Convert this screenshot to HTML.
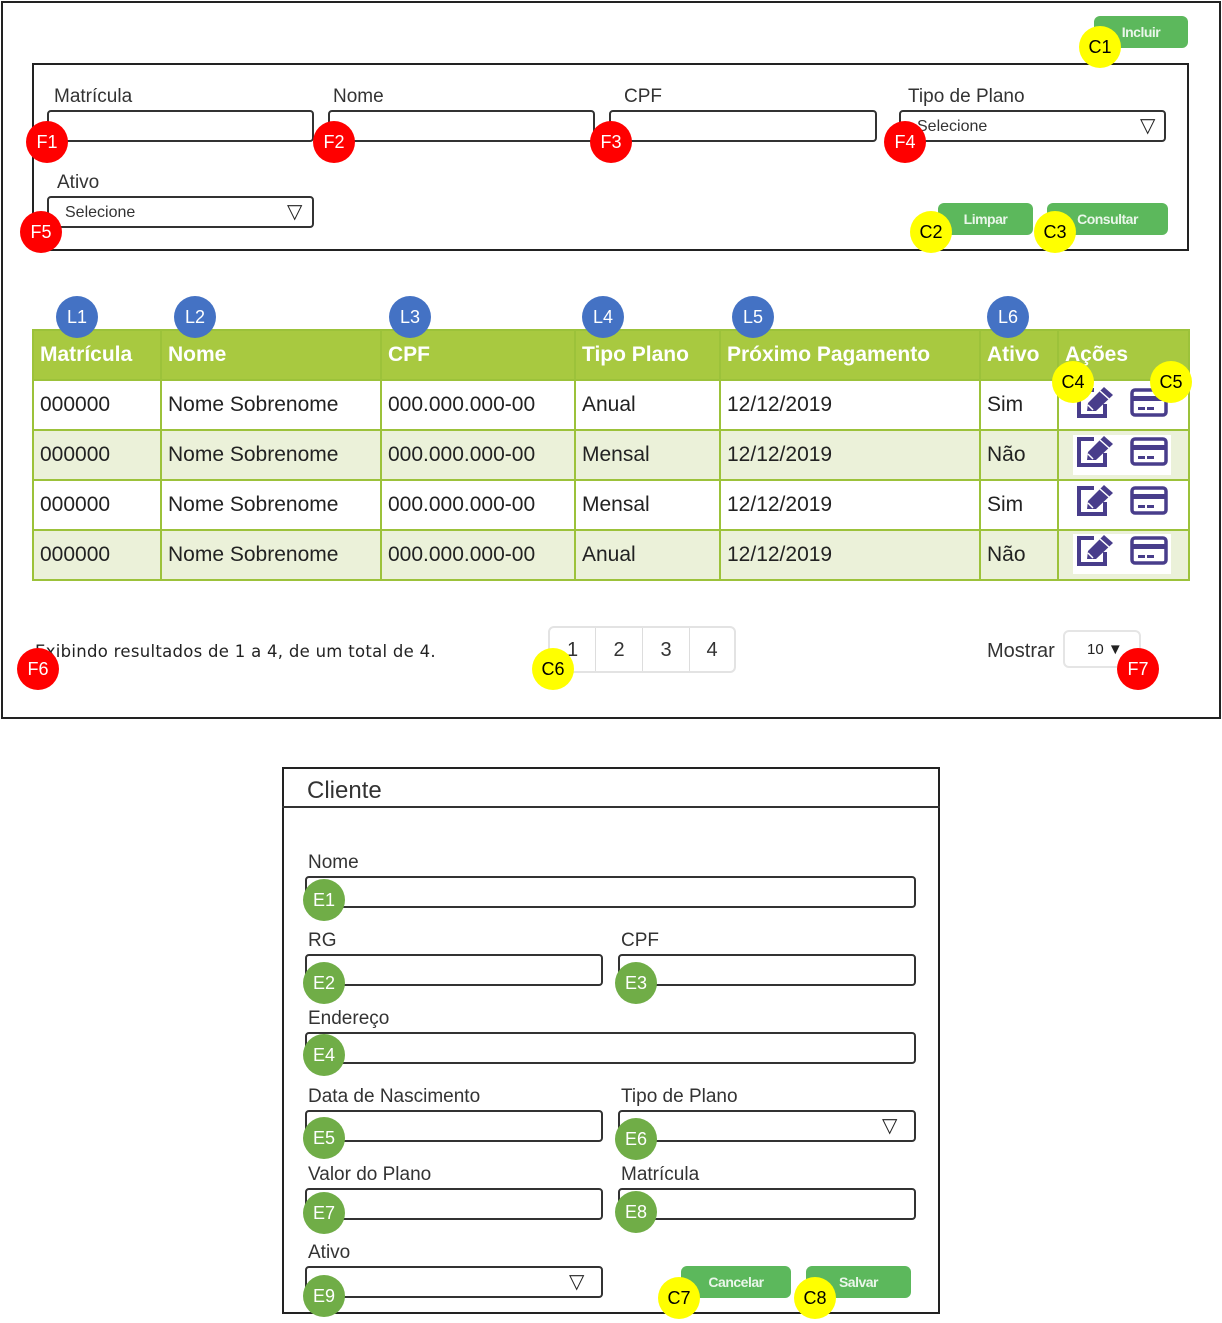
<!DOCTYPE html>
<html><head><meta charset="utf-8"><style>
*{box-sizing:border-box;margin:0;padding:0}
body{width:1222px;height:1323px;background:#fff;position:relative;font-family:"Liberation Sans",sans-serif;color:#333;overflow:hidden}
.a{position:absolute}
.in{position:absolute;border:2px solid #333;border-radius:4px;background:#fff;height:32px}
.lb{position:absolute;font-size:19px;color:#333;line-height:22px}
.bt{position:absolute;background:#5cb85c;color:#eaf6ea;border-radius:6px;font-size:14px;font-weight:bold;text-align:center;line-height:32px;height:32px;letter-spacing:-0.5px}
.bd{position:absolute;width:42px;height:42px;border-radius:50%;font-size:18px;text-align:center;line-height:42px;z-index:5}
.r{background:#f00;color:#fff}.y{background:#ff0;color:#000}.bl{background:#4472c4;color:#fff}.g{background:#70ad47;color:#fff}
.tri{position:absolute;font-size:20px;color:#222;line-height:20px}
table{position:absolute;left:32px;top:329px;border-collapse:collapse;border:2px solid #9cc23a}
td,th{border:2px solid #9cc23a;text-align:left;padding:0 6px;font-size:21px;height:50px;color:#222;font-weight:normal}
th{background:#a8c940;color:#fff;font-weight:bold;height:50px}
tr.e td{background:#ebf1d9}
.ic{background:#fff;padding:0;white-space:nowrap}
</style></head><body>
<div class="a" style="left:1px;top:1px;width:1220px;height:718px;border:2px solid #222"></div>
<div class="bt" style="left:1094px;top:16px;width:94px">Incluir</div>
<div class="a" style="left:32px;top:63px;width:1157px;height:188px;border:2px solid #222"></div>
<div class="lb" style="left:54px;top:86px">Matrícula</div>
<div class="lb" style="left:333px;top:86px">Nome</div>
<div class="lb" style="left:624px;top:86px">CPF</div>
<div class="lb" style="left:908px;top:86px">Tipo de Plano</div>
<div class="in" style="left:47px;top:110px;width:267px"></div>
<div class="in" style="left:328px;top:110px;width:267px"></div>
<div class="in" style="left:609px;top:110px;width:268px"></div>
<div class="in" style="left:899px;top:110px;width:267px"><span class="a" style="left:16px;top:6px;font-size:16px">Selecione</span></div>
<div class="tri" style="left:1140px;top:116px">▽</div>
<div class="lb" style="left:57px;top:172px">Ativo</div>
<div class="in" style="left:47px;top:196px;width:267px"><span class="a" style="left:16px;top:6px;font-size:16px">Selecione</span></div>
<div class="tri" style="left:287px;top:202px">▽</div>
<div class="bt" style="left:938px;top:203px;width:95px">Limpar</div>
<div class="bt" style="left:1047px;top:203px;width:121px">Consultar</div>

<table>
<tr><th style="width:128px">Matrícula</th><th style="width:220px">Nome</th><th style="width:194px">CPF</th><th style="width:145px">Tipo Plano</th><th style="width:260px">Próximo Pagamento</th><th style="width:78px">Ativo</th><th style="width:131px">Ações</th></tr>
<tr><td>000000</td><td>Nome Sobrenome</td><td>000.000.000-00</td><td>Anual</td><td>12/12/2019</td><td>Sim</td><td class="ic"></td></tr>
<tr class="e"><td>000000</td><td>Nome Sobrenome</td><td>000.000.000-00</td><td>Mensal</td><td>12/12/2019</td><td>Não</td><td class="ic" style="background:#ebf1d9"></td></tr>
<tr><td>000000</td><td>Nome Sobrenome</td><td>000.000.000-00</td><td>Mensal</td><td>12/12/2019</td><td>Sim</td><td class="ic"></td></tr>
<tr class="e"><td>000000</td><td>Nome Sobrenome</td><td>000.000.000-00</td><td>Anual</td><td>12/12/2019</td><td>Não</td><td class="ic" style="background:#ebf1d9"></td></tr>
</table>
<svg class="a" style="left:0;top:0" width="1222" height="600">
<defs>
<g id="ed"><path d="M18 4 H3 V30 H29 V18" fill="none" stroke="#483d8b" stroke-width="4"/><path d="M11 25 L12 17 L28 1 L37 9 L20 25 Z" fill="#483d8b"/><path d="M12 19 L17 24" stroke="#fff" stroke-width="1.5"/><path d="M24 5 L33 13" stroke="#fff" stroke-width="1.5"/></g>
<g id="cd"><rect x="2" y="2" width="34" height="25" rx="3" fill="none" stroke="#483d8b" stroke-width="3.5"/><rect x="2" y="8" width="34" height="5" fill="#483d8b"/><rect x="8" y="19" width="7" height="3" fill="#483d8b"/><rect x="17" y="19" width="7" height="3" fill="#483d8b"/></g>
</defs>
<rect x="1073" y="435" width="98" height="40" fill="#fff"/><rect x="1073" y="534" width="98" height="40" fill="#fff"/>
<use href="#ed" x="1076" y="386"/><use href="#cd" x="1130" y="388"/>
<use href="#ed" x="1076" y="435"/><use href="#cd" x="1130" y="437"/>
<use href="#ed" x="1076" y="484"/><use href="#cd" x="1130" y="486"/>
<use href="#ed" x="1076" y="534"/><use href="#cd" x="1130" y="536"/>
</svg>

<div class="a" style="left:35px;top:642px;font-size:17px;color:#222;font-family:'DejaVu Sans',sans-serif;letter-spacing:0.3px;transform:scaleX(0.97);transform-origin:left">Exibindo resultados de 1 a 4, de um total de 4.</div>
<div class="a" style="left:548px;top:626px;width:188px;height:47px;border:2px solid #e3e3e3;border-radius:6px;display:flex">
<div style="width:46px;border-right:1px solid #ddd;text-align:center;line-height:45px;font-size:20px">1</div>
<div style="width:47px;border-right:1px solid #ddd;text-align:center;line-height:45px;font-size:20px">2</div>
<div style="width:47px;border-right:1px solid #ddd;text-align:center;line-height:45px;font-size:20px">3</div>
<div style="width:44px;text-align:center;line-height:45px;font-size:20px">4</div></div>
<div class="a" style="left:987px;top:640px;font-size:20px;color:#333">Mostrar</div>
<div class="a" style="left:1063px;top:630px;width:78px;height:38px;border:2px solid #e5e5e5;border-radius:6px;font-size:15px;line-height:36px;padding-left:22px;color:#222">10 ▼</div>

<div class="a" style="left:282px;top:767px;width:658px;height:547px;border:2px solid #222"></div>
<div class="a" style="left:282px;top:806px;width:658px;height:2px;background:#333"></div>
<div class="a" style="left:307px;top:777px;font-size:24px;color:#333">Cliente</div>
<div class="lb" style="left:308px;top:852px">Nome</div>
<div class="in" style="left:305px;top:876px;width:611px"></div>
<div class="lb" style="left:308px;top:930px">RG</div>
<div class="lb" style="left:621px;top:930px">CPF</div>
<div class="in" style="left:305px;top:954px;width:298px"></div>
<div class="in" style="left:618px;top:954px;width:298px"></div>
<div class="lb" style="left:308px;top:1008px">Endereço</div>
<div class="in" style="left:305px;top:1032px;width:611px"></div>
<div class="lb" style="left:308px;top:1086px">Data de Nascimento</div>
<div class="lb" style="left:621px;top:1086px">Tipo de Plano</div>
<div class="in" style="left:305px;top:1110px;width:298px"></div>
<div class="in" style="left:618px;top:1110px;width:298px"></div>
<div class="tri" style="left:882px;top:1116px">▽</div>
<div class="lb" style="left:308px;top:1164px">Valor do Plano</div>
<div class="lb" style="left:621px;top:1164px">Matrícula</div>
<div class="in" style="left:305px;top:1188px;width:298px"></div>
<div class="in" style="left:618px;top:1188px;width:298px"></div>
<div class="lb" style="left:308px;top:1242px">Ativo</div>
<div class="in" style="left:305px;top:1266px;width:298px"></div>
<div class="tri" style="left:569px;top:1272px">▽</div>
<div class="bt" style="left:681px;top:1266px;width:110px">Cancelar</div>
<div class="bt" style="left:806px;top:1266px;width:105px">Salvar</div>

<div class="bd y" style="left:1079px;top:26px">C1</div>
<div class="bd r" style="left:26px;top:121px">F1</div>
<div class="bd r" style="left:313px;top:121px">F2</div>
<div class="bd r" style="left:590px;top:121px">F3</div>
<div class="bd r" style="left:884px;top:121px">F4</div>
<div class="bd r" style="left:20px;top:211px">F5</div>
<div class="bd y" style="left:910px;top:211px">C2</div>
<div class="bd y" style="left:1034px;top:211px">C3</div>
<div class="bd bl" style="left:56px;top:296px">L1</div>
<div class="bd bl" style="left:174px;top:296px">L2</div>
<div class="bd bl" style="left:389px;top:296px">L3</div>
<div class="bd bl" style="left:582px;top:296px">L4</div>
<div class="bd bl" style="left:732px;top:296px">L5</div>
<div class="bd bl" style="left:987px;top:296px">L6</div>
<div class="bd y" style="left:1052px;top:361px">C4</div>
<div class="bd y" style="left:1150px;top:361px">C5</div>
<div class="bd r" style="left:17px;top:648px">F6</div>
<div class="bd y" style="left:532px;top:648px">C6</div>
<div class="bd r" style="left:1117px;top:648px">F7</div>
<div class="bd g" style="left:303px;top:879px">E1</div>
<div class="bd g" style="left:303px;top:962px">E2</div>
<div class="bd g" style="left:615px;top:962px">E3</div>
<div class="bd g" style="left:303px;top:1034px">E4</div>
<div class="bd g" style="left:303px;top:1117px">E5</div>
<div class="bd g" style="left:615px;top:1118px">E6</div>
<div class="bd g" style="left:303px;top:1192px">E7</div>
<div class="bd g" style="left:615px;top:1191px">E8</div>
<div class="bd g" style="left:303px;top:1275px">E9</div>
<div class="bd y" style="left:658px;top:1277px">C7</div>
<div class="bd y" style="left:794px;top:1277px">C8</div>
</body></html>
